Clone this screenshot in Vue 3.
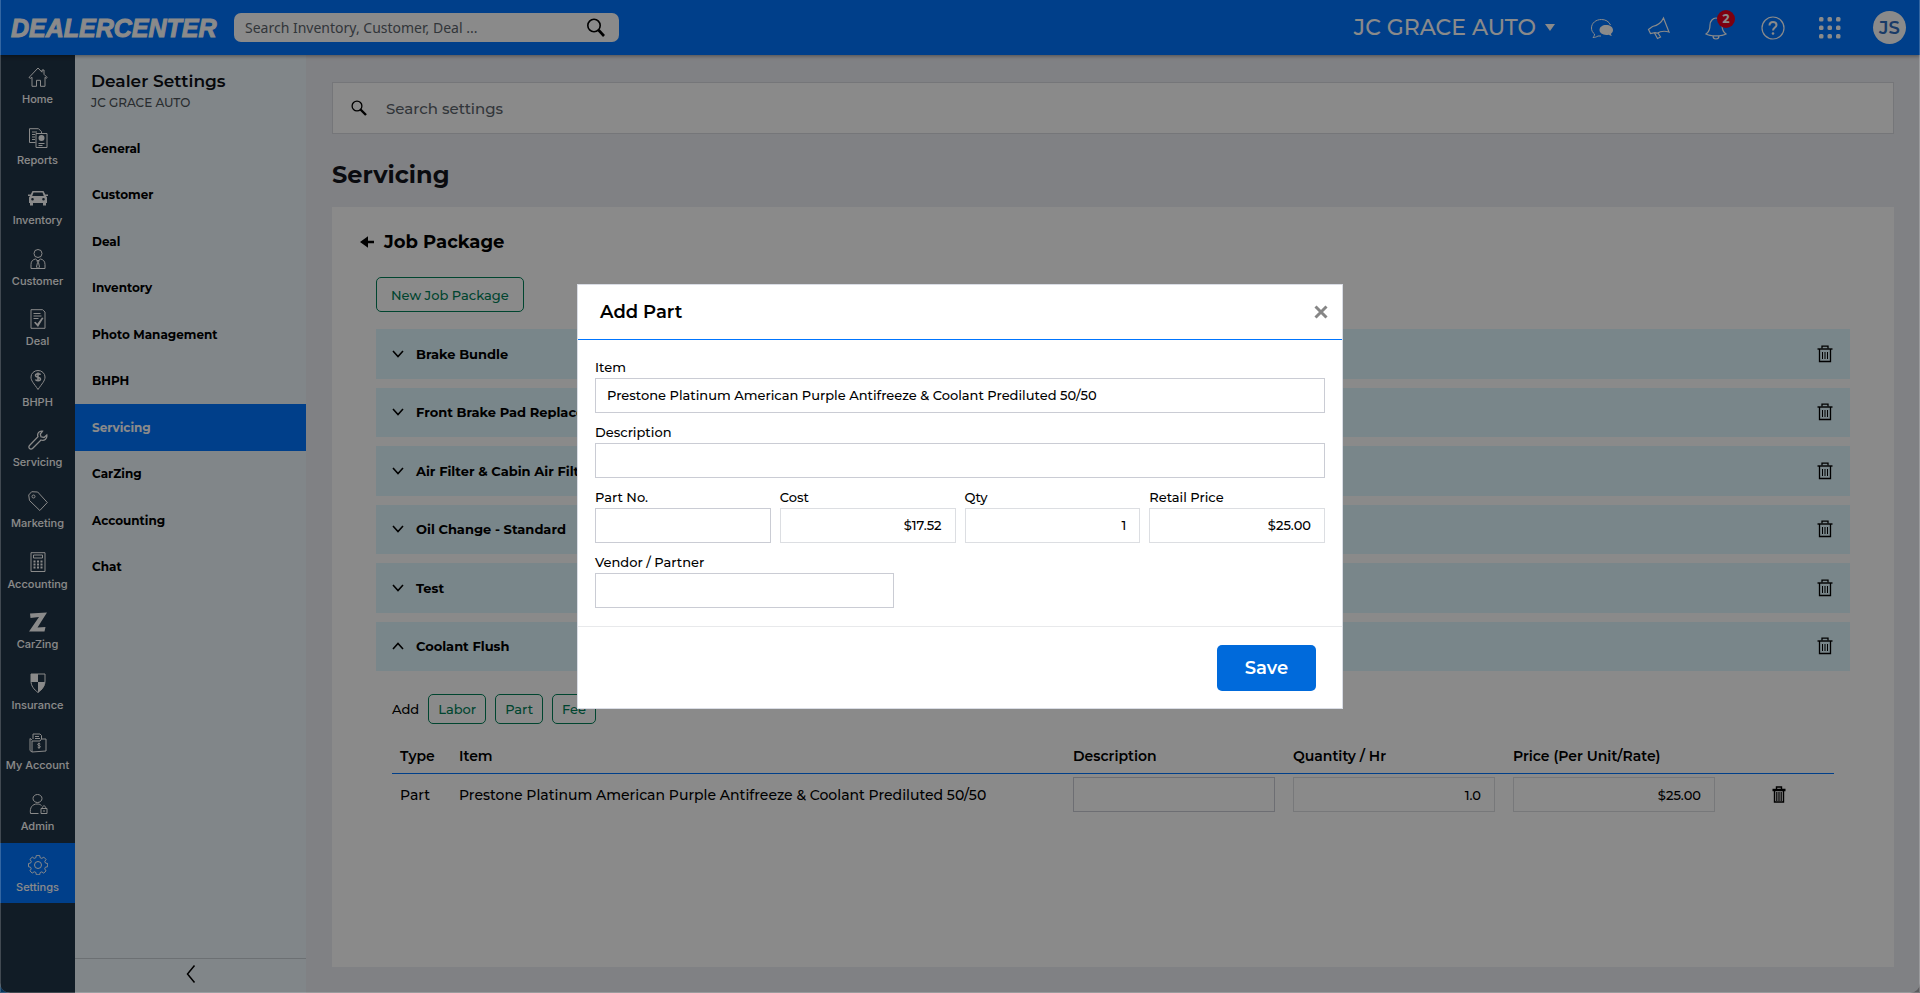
<script setup>
import { ref } from 'vue'

const rail = [
  { label: 'Home', icon: '<path d="M1 10.500 10 1l4 4.200V3h2v4.300l3.200 3.200-1 .8-1.200-1v9h-4.500v-6h-4v6H4v-9l-1.500 1z"/>' },
  { label: 'Reports', icon: '<path d="M7.500 14.500h-6V.7h9l3 3V5"/><path d="M4 4h5M4 6.500h3M4 9h3M4 11.500h3"/><path d="M8 5.500h11v14H8z"/><circle cx="13.500" cy="10" r="3" class="solid"/><path d="M10.500 15.500h6M10.500 17.500h4"/>' },
  { label: 'Inventory', icon: '<path class="solid" fill-rule="evenodd" d="M4.500 3h11l1.800 3.500H20V8h-2l1 1.500V15h-1v2.500h-3V15H5v2.500H2V15H1V9.500L2 8H0V6.500h2.700zm1 1.500L4.200 8h11.600l-1.300-3.500zM4.500 10a1.300 1.300 0 1 0 0 2.600 1.300 1.300 0 0 0 0-2.600zm11 0a1.300 1.300 0 1 0 0 2.600 1.300 1.300 0 0 0 0-2.600z"/>' },
  { label: 'Customer', icon: '<circle cx="10" cy="4.500" r="4"/><path d="M3 19.500v-4c0-3.500 2-5 4.500-5.500L10 12l2.500-2c2.500.5 4.500 2 4.500 5.500v4z"/><path d="M9 11.500h2l-.5 2 1 4.500-1.500 1.500L8.500 18l1-4.500z"/>' },
  { label: 'Deal', icon: '<path d="M3 .7h11.500L17 3v16.300H3z"/><path d="M5.500 4.500h7M5.500 7h8M5.500 9.500h5"/><path class="solid" d="m6 13.500 1.500-.8 1.800 2L14 8.500l1.500.5-5.500 9z"/>' },
  { label: 'BHPH', icon: '<path d="M10 19.500C6 13.500 3 11 3 7a7 6.500 0 0 1 14 0c0 4-3 6.500-7 12.500z"/><path stroke-width="1.500" d="M12.500 4.800C12 3.500 7.500 3.300 7.500 5.500s5 1.200 5 3.500-4.500 2-5 .5M10 2.500v9"/>' },
  { label: 'Servicing', icon: '<path stroke-width="1.300" d="M14.500 1.200c-3-.8-5.800 2.300-4.500 5.500L1.500 15.500a2 2 0 0 0 3 3L13 10c3 1.200 6.500-1 5.800-5L16 7.500 13 6.800 12.300 4z"/>' },
  { label: 'Marketing', icon: '<path d="m.7 4 3-3.300 6 .3 9.600 10.500-7.500 8L1.500 9.500z"/><circle cx="5.500" cy="5.500" r="1.500"/>' },
  { label: 'Accounting', icon: '<path d="M3 .7h14v18.800H3z"/><path d="M5.500 3h9v3h-9z"/><path stroke-width="1.800" stroke-dasharray="2 1.500" d="M5.500 9.500h9M5.500 12.500h9M5.500 15.500h9"/>' },
  { label: 'CarZing', icon: '<path class="solid" d="M2 1.500 19 .5 9.500 15.500l8-.5-1 4.500H1L11 5 2.500 6z"/>' },
  { label: 'Insurance', icon: '<path d="M3 1h14v7c0 5-3 8.500-7 11.500C6 16.500 3 13 3 8z"/><path class="solid" d="M3 1h7v8H3zM10 9h7c-.5 5-3.500 8-7 10.500z"/>' },
  { label: 'My Account', icon: '<path d="M5 6V1h7l1.500 1.500V6M7 3.500h4M7 5.500h5M4 7 2 5.500v12L4 19l14-1V6h-4.500L12 8H4v11"/><path d="M12.300 11c-.5-.8-2.600-.8-2.600.5s2.700.9 2.700 2.200-2.300 1.300-2.800.4M11 9.700v6"/>' },
  { label: 'Admin', icon: '<ellipse cx="9.500" cy="4.500" rx="4.500" ry="4"/><path d="M10.500 19.500h-8c-1-6 2-9.500 6.500-9.500 2 0 3.500.6 4.500 1.500M13 14.500h6v5h-6zM14.200 14.500c0-3.500 3.600-3.500 3.600 0M16 16v2"/>' },
  { label: 'Settings', icon: '<path d="m8.300.7 3.400 0 .5 2.400 1.700.7 2.100-1.300 2.300 2.400-1.300 2 .7 1.700 2.300.5v3.300l-2.400.5-.7 1.700 1.400 2.100-2.400 2.300-2-1.300-1.700.7-.5 2.300H8.300l-.5-2.400-1.700-.7L4 19l-2.300-2.400 1.300-2-.7-1.700L.2 12.400V9.100l2.200-.5.7-1.700L1.700 4.800 4.100 2.500l2 1.300 1.700-.7z" transform="translate(.3 -.3) scale(.97)"/><circle cx="10" cy="10" r="3.500"/>', active: true },
]

const sections = ['General', 'Customer', 'Deal', 'Inventory', 'Photo Management', 'BHPH', 'Servicing', 'CarZing', 'Accounting', 'Chat']

const packages = ref([
  { name: 'Brake Bundle', open: false },
  { name: 'Front Brake Pad Replacement', open: false },
  { name: 'Air Filter & Cabin Air Filter', open: false },
  { name: 'Oil Change - Standard', open: false },
  { name: 'Test', open: false },
  { name: 'Coolant Flush', open: true },
])

const part = ref({
  item: 'Prestone Platinum American Purple Antifreeze & Coolant Prediluted 50/50',
  description: '',
  number: '',
  cost: '$17.52',
  qty: '1',
  retail: '$25.00',
  vendor: '',
})
const line = ref({ description: '', quantity: '1.0', price: '$25.00' })
const modalOpen = ref(true)
</script>

<template>
  <div class="app">
    <header class="topbar">
      <a href="#" class="logo">DEALERCENTER</a>
      <div class="global-search">
        <input type="text" aria-label="Search" placeholder="Search Inventory, Customer, Deal ..." />
        <button type="button" aria-label="Run search">
          <svg width="20" height="20" viewBox="0 0 20 20" fill="none" stroke="#000"><circle cx="8" cy="7.500" r="6.200" stroke-width="1.600" /><path d="m12.500 12 5.500 6" stroke-width="2.600" /></svg>
        </button>
      </div>
      <nav class="tools" aria-label="Account tools">
        <button type="button" class="dealer">JC GRACE AUTO
          <svg width="10" height="7" viewBox="0 0 10 7" fill="#fff"><path d="M0 0h10L5 7z" /></svg>
        </button>
        <button type="button" class="tool" aria-label="Messages">
          <svg width="24" height="24" viewBox="0 0 24 24" fill="none" stroke="#fff"><path d="M20.500 9C19 5.500 15.500 3.500 11.500 3.500c-5.500 0-10 3.500-10 8.500 0 2.500 1 4.500 3 6 0 1.500-.5 2.500-1.500 3.500 2 0 3.500-.5 5-1.500h3" /><path d="M16 9c4 0 7 2 7 5 0 2-1 3-2 3.700 0 1 .5 1.500 1 2-1.500 0-2.500-.5-3.500-1-5 .8-9-1.200-9-4.700 0-3 3-5 6.500-5z" fill="#fff" stroke="none" /></svg>
        </button>
        <button type="button" class="tool" aria-label="Announcements">
          <svg width="24" height="24" viewBox="0 0 24 24" fill="none" stroke="#fff" stroke-width="1.200"><path d="M16.500 2 22 16c-4-1.200-8-1.200-12 1.200l-2-.5-4.500.8-2-4 4-3C10.500 9.500 14.500 6.500 16.500 2z" /><path d="m7.500 17 3 5.500 3-1.500-2.500-4" /></svg>
        </button>
        <button type="button" class="tool" aria-label="Notifications, 2 new">
          <svg width="24" height="24" viewBox="0 0 24 24" fill="none" stroke="#fff" stroke-width="1.200"><path d="M2 18c3-2 4-4 4-9 0-4 3-7 6-7s6 3 6 7c0 5 1 7 4 9-4 2.500-16 2.500-20 0zM9 20c0 4 6 4 6 0" /></svg>
          <span class="badge">2</span>
        </button>
        <button type="button" class="tool" aria-label="Help">
          <svg width="24" height="24" viewBox="0 0 24 24" fill="none" stroke="#fff"><circle cx="12" cy="12" r="11" stroke-width="1.200" /><path d="M8.500 9.500c0-5 7-4.500 7-.5 0 2.500-3.500 2.500-3.500 5.500" stroke-width="2" /><circle cx="12" cy="17.500" r="1.300" fill="#fff" stroke="none" /></svg>
        </button>
        <button type="button" class="tool" aria-label="Apps">
          <svg width="24" height="24" viewBox="0 0 24 24" fill="#fff"><template v-for="y in 3" :key="y"><rect v-for="x in 3" :key="x" :x="x * 8.500 - 7.500" :y="y * 8.500 - 7.500" width="4.500" height="4.500" rx="1.500" /></template></svg>
        </button>
        <button type="button" class="avatar">JS</button>
      </nav>
    </header>

    <div class="body">
      <nav class="rail" aria-label="Main">
        <div class="rail-items">
          <a v-for="r in rail" :key="r.label" href="#" :class="{ active: r.active }">
            <svg width="20" height="20" viewBox="0 0 20 20" v-html="r.icon"></svg>
            <span>{{ r.label }}</span>
          </a>
        </div>
      </nav>

      <aside class="submenu">
        <h2>Dealer Settings</h2>
        <p>JC GRACE AUTO</p>
        <nav class="sections" aria-label="Dealer settings">
          <a v-for="s in sections" :key="s" href="#" :class="{ active: s === 'Servicing' }">{{ s }}</a>
        </nav>
        <button type="button" class="collapse" aria-label="Collapse menu">
          <svg width="10" height="18" viewBox="0 0 10 18" fill="none" stroke="#000" stroke-width="1.500"><path d="M8.500.5 1.500 9l7 8.500" /></svg>
        </button>
      </aside>

      <main class="content">
        <div class="settings-search">
          <svg width="16" height="16" viewBox="0 0 16 16" fill="none" stroke="#000"><circle cx="6" cy="6" r="4.900" stroke-width="1.300" /><path d="m9.500 9.500 5.500 5.500" stroke-width="2.400" /></svg>
          <input type="text" aria-label="Search settings" placeholder="Search settings" />
        </div>
        <h1>Servicing</h1>
        <section class="card">
          <div class="card-title">
            <button type="button" aria-label="Back">
              <svg width="14" height="12" viewBox="0 0 14 12"><path d="M0 6 8 .3V4.700h6v2.600H8v4.400z" /></svg>
            </button>
            <h3>Job Package</h3>
          </div>
          <div class="card-body">
            <button type="button" class="outline new-package">New Job Package</button>
            <div class="packages">
              <div v-for="p in packages" :key="p.name" class="package">
                <button type="button" class="toggle" :aria-expanded="p.open" @click="p.open = !p.open">
                  <svg width="12" height="8" viewBox="0 0 12 8" fill="none" stroke="#000" stroke-width="1.600"><path :d="p.open ? 'M1 7l5-5.500L11 7' : 'M1 1l5 5.500L11 1'" /></svg>
                  {{ p.name }}
                </button>
                <button type="button" class="trash" :aria-label="'Delete ' + p.name">
                  <svg width="16" height="18" viewBox="0 0 16 18" fill="none" stroke="#000"><path d="M.5 4h15" stroke-width="1.400" /><path d="M5 3.500V1.200h6v2.300M2.500 4v12.500h11V4" stroke-width="1.300" /><path d="M5.500 7v7M8 7v7M10.500 7v7" /></svg>
                </button>
              </div>
            </div>

            <div class="detail">
              <div class="add">
                <span>Add</span>
                <button type="button" class="outline small">Labor</button>
                <button type="button" class="outline small">Part</button>
                <button type="button" class="outline small">Fee</button>
              </div>
              <table>
                <colgroup>
                  <col class="c-type" /><col /><col class="c-field" /><col class="c-field" /><col class="c-field" /><col class="c-action" />
                </colgroup>
                <thead>
                  <tr>
                    <th class="first">Type</th><th>Item</th><th>Description</th><th>Quantity / Hr</th><th>Price (Per Unit/Rate)</th><th></th>
                  </tr>
                </thead>
                <tbody>
                  <tr>
                    <td class="first">Part</td>
                    <td>{{ part.item }}</td>
                    <td><input v-model="line.description" type="text" aria-label="Line description" /></td>
                    <td><input v-model="line.quantity" class="num soft" type="text" aria-label="Quantity" /></td>
                    <td><input v-model="line.price" class="num soft" type="text" aria-label="Price" /></td>
                    <td class="action">
                      <button type="button" class="trash" aria-label="Delete line">
                        <svg width="14" height="17" viewBox="0 0 14 17" fill="none" stroke="#000"><path d="M.5 4h13" stroke-width="2.400" /><path d="M4.500 3V1h5v2M2.500 4v12h9V4" stroke-width="1.400" /><path d="M4.800 6v9M7 6v9M9.200 6v9" stroke-width="1.200" /></svg>
                      </button>
                    </td>
                  </tr>
                </tbody>
              </table>
            </div>
          </div>
        </section>
      </main>
    </div>

    <div v-if="modalOpen" class="overlay">
      <form class="modal" role="dialog" aria-modal="true" aria-labelledby="modal-title" @submit.prevent>
        <div class="modal-head">
          <h2 id="modal-title">Add Part</h2>
          <button type="button" aria-label="Close" @click="modalOpen = false">
            <svg width="14" height="14" viewBox="0 0 14 14" fill="none" stroke="#868686" stroke-width="3"><path d="m1.500 1.500 11 11M12.500 1.500l-11 11" /></svg>
          </button>
        </div>
        <div class="modal-body">
          <div class="field"><label for="item">Item</label><input id="item" v-model="part.item" type="text" /></div>
          <div class="field"><label for="description">Description</label><input id="description" v-model="part.description" type="text" /></div>
          <div class="quad">
            <div class="field"><label for="number">Part No.</label><input id="number" v-model="part.number" type="text" /></div>
            <div class="field"><label for="cost">Cost</label><input id="cost" v-model="part.cost" class="num soft" type="text" /></div>
            <div class="field"><label for="qty">Qty</label><input id="qty" v-model="part.qty" class="num soft" type="text" /></div>
            <div class="field"><label for="retail">Retail Price</label><input id="retail" v-model="part.retail" class="num soft" type="text" /></div>
          </div>
          <div class="field vendor"><label for="vendor">Vendor / Partner</label><input id="vendor" v-model="part.vendor" type="text" /></div>
        </div>
        <div class="modal-foot"><button type="submit" class="save">Save</button></div>
      </form>
    </div>
  </div>
</template>

<style>
body {
  margin: 0;
  background: linear-gradient(90deg, #0a5ea8 0 20%, #aaa9ae 60%);
}
</style>

<style scoped>
* { box-sizing: border-box; }
.app {
  position: relative;
  min-height: 100vh;
  display: flex;
  flex-direction: column;
  overflow: hidden;
  border-radius: 0 0 10px 10px;
  background: #edeef4;
  font-family: Montserrat, Inter, sans-serif;
  font-size: 14px;
  font-weight: 500;
  color: #000;
}
h1, h2, h3, p { margin: 0; }
a { color: inherit; text-decoration: none; }
button {
  font: inherit;
  color: inherit;
  padding: 0;
  border: 0;
  background: none;
  cursor: pointer;
}
input {
  font: inherit;
  color: inherit;
  padding: 0;
  border: 0;
  outline: 0;
  min-width: 0;
}
svg { display: block; flex: none; }

.topbar {
  position: relative;
  z-index: 1;
  height: 55px;
  display: flex;
  align-items: center;
  padding: 0 14px 0 11px;
  background: #0075ff;
  color: #fff;
  box-shadow: 0 1px 4px rgba(0, 0, 0, .4);
}
.logo {
  width: 223px;
  font: italic bold 25px/30px "Liberation Sans", sans-serif;
  -webkit-text-stroke: 1px #fff;
}
.global-search {
  width: 385px;
  height: 29px;
  display: flex;
  align-items: center;
  padding: 0 13px 0 11px;
  border-radius: 7px;
  background: #fff;
}
.global-search input {
  flex: 1;
  background: none;
  font: 14px/20px "Noto Sans", sans-serif;
}
input::placeholder { color: #5c646c; opacity: 1; }
.tools {
  margin-left: auto;
  display: flex;
  align-items: center;
}
.dealer {
  display: flex;
  align-items: center;
  gap: 9px;
  margin-right: 35px;
  font-size: 22px;
}
.tool { position: relative; width: 24px; margin-right: 33px; }
.tool:nth-last-child(2) { margin-right: 31px; }
.badge {
  position: absolute;
  top: -6px;
  left: 13px;
  width: 18px;
  height: 18px;
  border-radius: 9px;
  background: #e8001c;
  font-size: 12px;
  line-height: 18px;
  font-weight: 700;
}
.avatar {
  width: 33px;
  height: 33px;
  border-radius: 50%;
  background: #fff;
  color: #2f6dc0;
  font-size: 18px;
  font-weight: 600;
}

.body { flex: 1; display: flex; }
.rail {
  width: 75px;
  background: #213446;
  color: #fff;
  font-family: Inter, sans-serif;
  font-size: 11px;
  line-height: 16px;
}
.rail-items {
  height: 848px;
  display: flex;
  flex-direction: column;
}
.rail a {
  flex: 1;
  display: flex;
  flex-direction: column;
  align-items: center;
  gap: 4px;
  padding-top: 12px;
  white-space: nowrap;
}
.rail a.active { background: #0075ff; }
.rail svg { fill: none; stroke: #fff; stroke-width: 1; }
.rail svg :deep(.solid) { fill: #fff; stroke: none; }

.submenu {
  width: 231px;
  display: flex;
  flex-direction: column;
  background: #eff8fe;
}
.submenu h2 {
  padding: 16px 16px 0;
  font-size: 17px;
  line-height: 20px;
  font-weight: 600;
  color: #0d1016;
}
.submenu p {
  padding: 4px 16px 0;
  font-size: 12px;
  line-height: 16px;
  color: #4d5358;
}
.sections {
  height: 465px;
  margin-top: 14px;
  display: flex;
  flex-direction: column;
}
.sections a {
  flex: 1;
  display: flex;
  align-items: center;
  padding: 0 17px;
  font-size: 12px;
  font-weight: 700;
}
.sections a.active { background: #0075ff; color: #fff; }
.collapse {
  height: 35px;
  margin-top: auto;
  display: flex;
  align-items: center;
  justify-content: center;
  padding-bottom: 4px;
  border-top: 1px solid #c8cfd4;
}

.content {
  flex: 1;
  min-width: 0;
  display: flex;
  flex-direction: column;
  padding: 27px 26px 26px;
}
.settings-search {
  height: 52px;
  display: flex;
  align-items: center;
  gap: 19px;
  padding: 0 18px;
  border: 1px solid #d8dae0;
  background: #fff;
}
.settings-search input { flex: 1; font-size: 15px; background: none; }
h1 {
  padding: 28px 0 19px;
  font-size: 24px;
  line-height: 26px;
  font-weight: 700;
  color: #14151c;
}
.card { flex: 1; padding: 24px 44px 24px 28px; background: #fff; }
.card-title { display: flex; align-items: center; gap: 10px; }
.card-title h3 { font-size: 18px; line-height: 22px; font-weight: 700; }
.card-body { padding: 24px 0 0 16px; }
.outline {
  border: 1px solid #008058;
  border-radius: 5px;
  color: #008058;
  font-size: 13px;
}
.new-package { height: 35px; padding: 0 14px; }
.packages {
  height: 342px;
  margin-top: 17px;
  display: grid;
  grid-auto-rows: 1fr;
  gap: 9px;
}
.package {
  display: flex;
  align-items: center;
  padding: 0 17px 0 16px;
  background: #e0f8ff;
}
.toggle {
  flex: 1;
  display: flex;
  align-items: center;
  gap: 12px;
  font-size: 13px;
  font-weight: 700;
  text-align: left;
}
.detail { padding: 23px 16px 0; }
.add { display: flex; align-items: center; gap: 9px; font-size: 13px; }
.small { height: 30px; padding: 0 9px; }

table {
  width: 100%;
  margin-top: 16px;
  table-layout: fixed;
  border-collapse: collapse;
}
.c-type { width: 67px; }
.c-field { width: 220px; }
.c-action { width: 101px; }
th {
  height: 33px;
  padding: 0;
  border-bottom: 1px solid #0075ff;
  font-size: 14px;
  font-weight: 600;
  text-align: left;
}
td { height: 43px; padding: 0; font-size: 14px; }
.first { padding-left: 8px; }
td input { width: 202px; display: block; background: none; }
.action .trash { display: block; margin-left: 39px; }

td input, .field input {
  height: 35px;
  padding: 0 13px 0 11px;
  border: 1px solid #caccd4;
  font-size: 13px;
}
.num { text-align: right; }
td input.soft, .field input.soft { border-color: #dcdee2; }

.overlay {
  position: fixed;
  inset: 0;
  z-index: 2;
  display: flex;
  align-items: center;
  justify-content: center;
  border-right: 1px solid rgba(255, 255, 255, .2);
  border-bottom: 1px solid rgba(255, 255, 255, .2);
  border-left: 1px solid rgba(255, 255, 255, .2);
  background: rgba(0, 0, 0, .46);
}
.modal {
  width: 766px;
  max-width: 100%;
  border: 1px solid #d9dce4;
  background: #fff;
}
.modal-head {
  display: flex;
  align-items: center;
  justify-content: space-between;
  height: 55px;
  padding: 0 14px 0 22px;
  border-bottom: 1px solid #0075ff;
}
.modal-head h2 { font-size: 18px; font-weight: 600; }
.modal-body {
  display: flex;
  flex-direction: column;
  gap: 10px;
  padding: 18px 17px;
}
.field { display: flex; flex-direction: column; }
.field label { font-size: 13px; line-height: 18px; padding-bottom: 2px; }
.field input { width: 100%; }
.quad { display: grid; grid-template-columns: repeat(4, 1fr); gap: 9px; }
.vendor { width: 299px; }
.modal-foot {
  display: flex;
  justify-content: flex-end;
  padding: 18px 26px 17px;
  border-top: 1px solid #e8e9eb;
}
.save {
  width: 99px;
  height: 46px;
  border-radius: 5px;
  background: #006adb;
  color: #fff;
  font-size: 18px;
  font-weight: 600;
}
</style>
